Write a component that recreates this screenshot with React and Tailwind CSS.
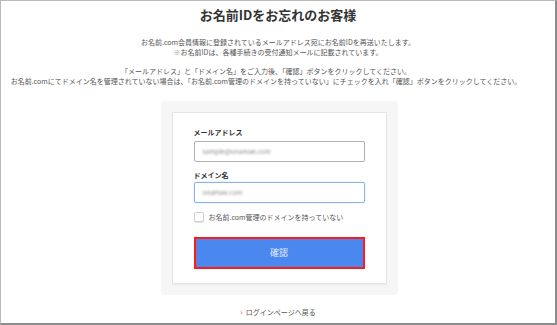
import React from "react";

export default function App() {
  const jp = { fontFamily: '"Noto Sans CJK JP", "Noto Sans", sans-serif' };
  return (
    <div
      className="w-[557px] h-[325px] bg-white border-l border-t border-l-[#b9b9b9] border-t-[#b9b9b9] border-r-2 border-b-2 border-r-[#8c8c8c] border-b-[#8c8c8c] flex flex-col items-center overflow-hidden"
      style={jp}
    >
      <h1 className="mt-[5px] text-[13px] leading-[18px] font-bold text-[#333]">
        お名前IDをお忘れのお客様
      </h1>
      <div className="mt-[13px] text-[7px] leading-[10px] text-[#555] text-center">
        <p>お名前.com会員情報に登録されているメールアドレス宛にお名前IDを再送いたします。</p>
        <p>
          <span className="inline-block grayscale opacity-70 text-[#555]">※</span>
          お名前IDは、各種手続きの受付通知メールに記載されています。
        </p>
      </div>
      <div className="mt-[9px] pr-[24px] text-[7px] leading-[10px] text-[#555] text-center whitespace-nowrap">
        <p>「メールアドレス」と「ドメイン名」をご入力後、「確認」ボタンをクリックしてください。</p>
        <p>お名前.comにてドメイン名を管理されていない場合は、「お名前.com管理のドメインを持っていない」にチェックを入れ「確認」ボタンをクリックしてください。</p>
      </div>
      <div className="mt-[15px] ml-[2px] w-[237px] bg-[#f6f6f6] rounded-[4px] p-[11px]">
        <div className="bg-white border border-[#e4e4e4] shadow-[0_1px_1px_rgba(0,0,0,0.04)] px-[21px] pt-[14px] pb-[14px]">
          <div className="text-[7px] leading-[10px] font-bold text-[#333]">メールアドレス</div>
          <div className="mt-[4px] h-[21px] border border-[#b0b0b0] rounded-[2px] flex items-center px-[8px]">
            <span className="text-[6.5px] text-[#8a8a8a] blur-[1px]">sample@onamae.com</span>
          </div>
          <div className="mt-[8px] text-[7px] leading-[10px] font-bold text-[#333]">ドメイン名</div>
          <div className="mt-[2px] h-[21px] border border-[#8ab4f0] rounded-[2px] shadow-[0_0_2px_rgba(100,150,240,0.35)] flex items-center px-[8px]">
            <span className="text-[6.5px] text-[#8a8a8a] blur-[1px]">onamae.com</span>
          </div>
          <div className="mt-[9px] flex items-center gap-[5px]">
            <div className="w-[10px] h-[10px] border border-[#cfcfcf] rounded-[2px] bg-white shadow-[0_1px_1px_rgba(0,0,0,0.12)]" />
            <span className="text-[7px] leading-[10px] text-[#555]">お名前.com管理のドメインを持っていない</span>
          </div>
          <button className="mt-[15px] w-full h-[32px] bg-[#4a87ee] border-2 border-[#ff1a1a] flex items-center justify-center text-[9px] text-[#e6eeff]">
            確認
          </button>
        </div>
      </div>
      <div className="mt-[12px] flex items-center gap-[3px] text-[7px] leading-[10px] text-[#555]">
        <span className="text-[#e23c3c] text-[8px]">›</span>
        <span>ログインページへ戻る</span>
      </div>
    </div>
  );
}
